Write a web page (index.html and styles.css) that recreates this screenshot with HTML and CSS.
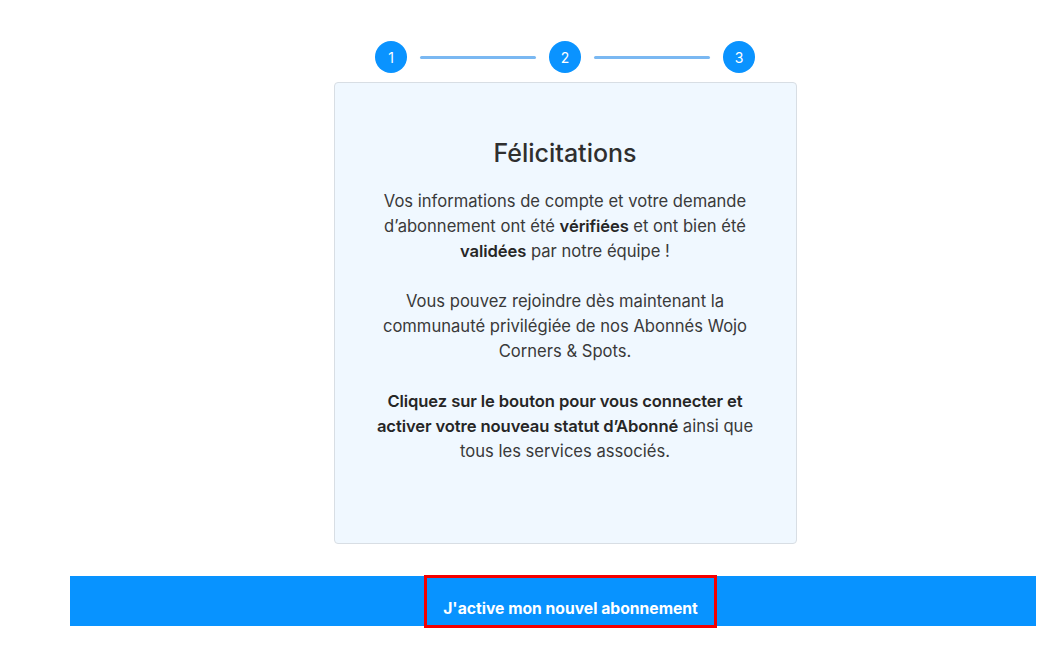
FILE: index.html
```html
<!DOCTYPE html>
<html lang="fr">
<head>
    <meta charset="UTF-8">
    <meta name="viewport" content="width=device-width, initial-scale=1.0">
    <title>Abonnement validé</title>
    <link rel="stylesheet" href="styles.css">
</head>
<body>
    <div class="page">
        <div class="stepper">
            <span class="step">1</span>
            <span class="step-line"></span>
            <span class="step">2</span>
            <span class="step-line"></span>
            <span class="step">3</span>
        </div>

        <div class="card">
            <h1>Félicitations</h1>
            <p>Vos informations de compte et votre demande d’abonnement ont été <strong>vérifiées</strong> et ont bien été <strong>validées</strong> par notre équipe !</p>
            <p>Vous pouvez rejoindre dès maintenant la communauté privilégiée de nos Abonnés Wojo Corners &amp; Spots.</p>
            <p><strong>Cliquez sur le bouton pour vous connecter et activer votre nouveau statut d’Abonné</strong> ainsi que tous les services associés.</p>
        </div>

        <div class="action-bar">
            <button type="button" class="activate-btn">J'active mon nouvel abonnement</button>
        </div>
    </div>
</body>
</html>
```

FILE: styles.css
```css
body {
    font-family: Inter, "Noto Sans", Arial, sans-serif;
    background-color: #fff;
    color: #333;
    margin: 0;
    padding: 0;
}

.page {
    width: 990px;
    margin-left: 70px;
    padding-top: 41px;
    display: flex;
    flex-direction: column;
    align-items: center;
}

.stepper {
    display: flex;
    align-items: center;
    gap: 12px;
    height: 32px;
}

.step {
    width: 32px;
    height: 32px;
    border-radius: 50%;
    background-color: #0a93ff;
    color: white;
    font-size: 14px;
    display: flex;
    justify-content: center;
    align-items: center;
}

.step-line {
    width: 116px;
    height: 3px;
    border-radius: 2px;
    background-color: #7ab8f2;
    margin: 0 1px;
}

.card {
    box-sizing: border-box;
    width: 463px;
    margin-top: 9px;
    padding: 55px 38px 40px;
    min-height: 462px;
    background-color: #f0f8ff;
    border: 1px solid #d8dee4;
    border-radius: 4px;
    text-align: center;
}

.card h1 {
    font-size: 25px;
    font-weight: 500;
    line-height: 30px;
    margin: 0 0 21px;
    color: #2f2f2f;
}

.card p {
    font-size: 16.6px;
    line-height: 25px;
    margin: 0 0 25px;
    color: #3a3a3a;
}

.card strong {
    font-weight: 600;
    letter-spacing: -0.1px;
    color: #262626;
}

/* the blue band is 50px high, the framed button overflows it a little */
.action-bar {
    box-sizing: border-box;
    align-self: flex-start;
    width: 966px;
    height: 53px;
    margin-top: 31px;
    padding-left: 35px;
    background: linear-gradient(to bottom, transparent 1px, #0893ff 1px, #0893ff 51px, transparent 51px);
    display: flex;
    justify-content: center;
}

.activate-btn {
    box-sizing: border-box;
    flex: none;
    width: 293px;
    height: 53px;
    padding: 14px 0 0;
    background: linear-gradient(to bottom, transparent 0, #0893ff 0, #0893ff 48px, #fff 48px);
    border: 3px solid #f50000;
    color: white;
    font-family: Inter, "Noto Sans", Arial, sans-serif;
    font-size: 15.7px;
    font-weight: 700;
    line-height: 18px;
    cursor: pointer;
}
```
